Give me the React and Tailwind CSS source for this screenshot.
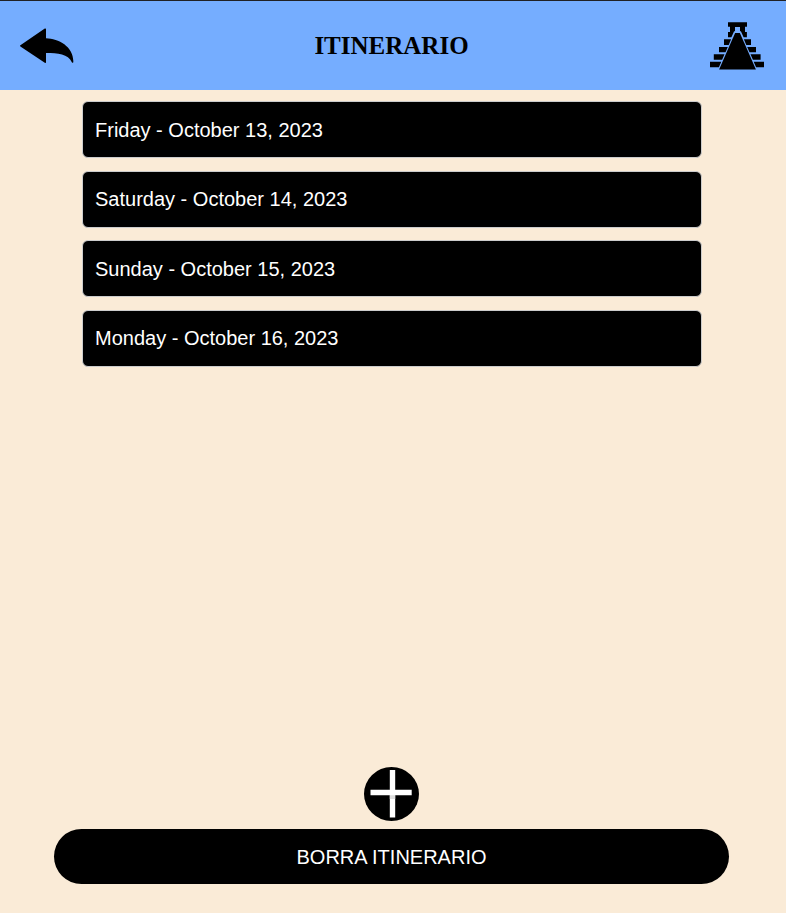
const days = [
  "Friday - October 13, 2023",
  "Saturday - October 14, 2023",
  "Sunday - October 15, 2023",
  "Monday - October 16, 2023",
];

function BackArrow() {
  return (
    <svg className="h-[36px] w-[55px]" viewBox="0 0 55 36" fill="#000" aria-hidden="true">
      <path d="M.4 17.200 24.800 .6Q26 0 26 1.300V10.200C39 10.500 54 19 53.300 34Q53 35.400 52 34.500C48 25.800 38 25 26 25V33.900Q26 35.400 24.800 34.700L.4 18.400Q-.4 17.800 .4 17.200Z" />
    </svg>
  );
}

function Pyramid() {
  return (
    <svg className="h-[48px] w-[54px]" viewBox="0 0 54 48" fill="#000" aria-hidden="true">
      <path d="M18 .3H37V4.700H35V10H36.900V15.300H33.600L30.900 9.300H30V5H25V9.300H24.100L21.400 15.300H18V10H20V4.700H18Z" />
      <path d="M25.100 11H29.900L45.900 47.400H9.100Z" />
      <path d="M14 17.300H21.100L18.700 22.900H14ZM9 24.900H17.800L15.500 30.300H9ZM3.800 32.300H14.500L12.100 37.700H3.800ZM0 39.700H11.300L8.900 45.200H0Z" />
      <path d="M41 17.300H33.900L36.300 22.900H41ZM46 24.900H37.200L39.500 30.300H46ZM50.600 32.300H40.500L42.900 37.700H50.600ZM54 39.700H43.700L46.100 45.200H54Z" />
    </svg>
  );
}

function AddIcon() {
  return (
    <svg className="h-[54px] w-[55px]" viewBox="0 0 55 54" aria-hidden="true">
      <ellipse cx="27.500" cy="27" rx="27.500" ry="27" fill="#000" />
      <path d="M25.800 3H31.200V50.500H25.800Z" fill="#fff" />
      <path d="M6.500 22.700H47.700V28.200H6.500Z" fill="#fff" />
      <path d="M25.800 28.200H31.200V32H25.800Z" fill="#ddd" />
    </svg>
  );
}

export default function App() {
  return (
    <div className="flex h-[913px] w-full flex-col bg-[#faebd7] font-['Liberation_Sans',Arial,sans-serif]">
      <header className="flex h-[90px] shrink-0 items-center justify-between border-t border-[#202124] bg-[#75adff] pl-5 pr-[22px]">
        <button aria-label="Volver"><BackArrow /></button>
        <h1 className="pr-[2px] font-['Liberation_Serif','Times_New_Roman',serif] text-[25px] font-bold leading-[30px]">ITINERARIO</h1>
        <button aria-label="Inicio"><Pyramid /></button>
      </header>
      <main className="flex flex-1 flex-col pt-[11px]">
        <ul className="ml-[82px] flex w-[620px] flex-col gap-[12.6px]">
          {days.map((day) => (
            <li key={day} className="flex h-[57px] items-center rounded-md border border-[#ccc] bg-black px-3 text-[20px] text-white">
              {day}
            </li>
          ))}
        </ul>
      </main>
      <footer className="flex shrink-0 flex-col items-center pb-[29px] pr-[3px]">
        <button aria-label="Agregar"><AddIcon /></button>
        <button className="mt-2 h-[55px] w-[675px] rounded-full bg-black text-[20px] text-white">BORRA ITINERARIO</button>
      </footer>
    </div>
  );
}
